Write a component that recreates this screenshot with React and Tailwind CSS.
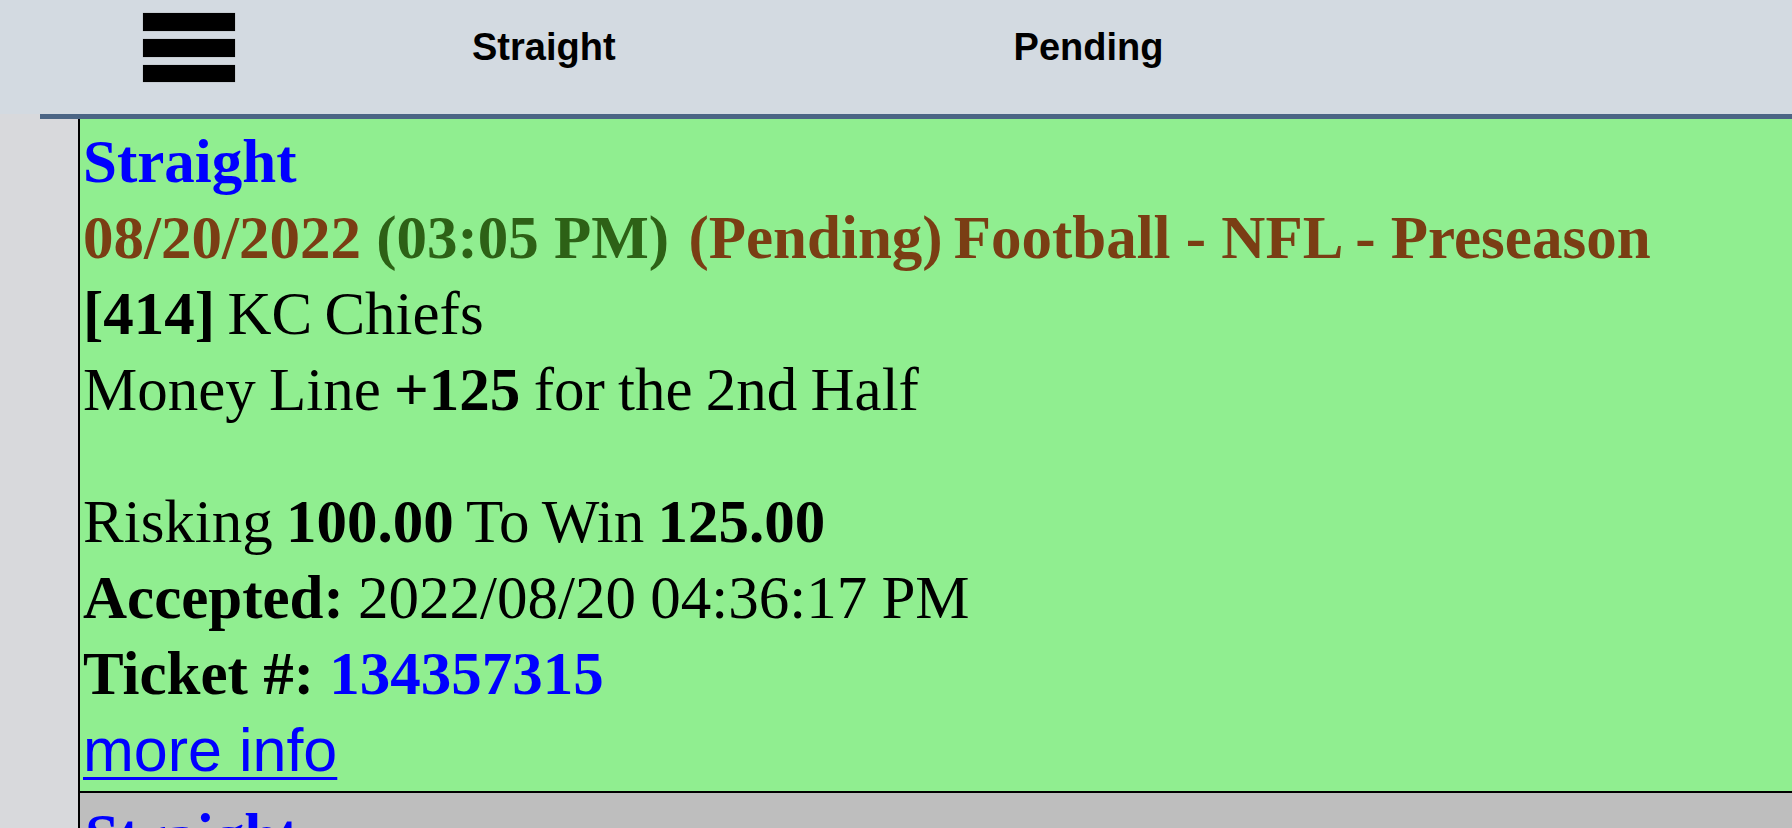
export default function App() {
  const serif = { fontFamily: '"Liberation Serif", "Times New Roman", serif' };
  return (
    <div className="h-screen w-full overflow-hidden bg-[#d8d9dc]">
      {/* Header */}
      <div className="bg-[#d3dae1]">
        <div
          className="flex h-[114px] items-center pb-[20px] pl-[143px] text-[38px] font-bold text-black"
          style={{ fontFamily: '"Liberation Sans", Arial, sans-serif' }}
        >
          <div className="flex w-[92px] flex-col gap-[8px]">
            <div className="h-[18px] w-full bg-black shadow-[0_0_1px_#888]" />
            <div className="h-[18px] w-full bg-black shadow-[0_0_1px_#888]" />
            <div className="h-[17px] w-full bg-black shadow-[0_0_1px_#888]" />
          </div>
          <div className="ml-[237px]">Straight</div>
          <div className="ml-[398px]">Pending</div>
        </div>
      </div>
      <div className="ml-[40px] h-[5px] bg-[#4b6585]" />

      {/* Green ticket */}
      <div
        className="ml-[78px] border-b-2 border-l-2 border-black bg-[#90ee90] pb-[2px] pl-[3px] pt-[5px] text-[61px] leading-[76px] text-black"
        style={serif}
      >
        <div className="font-bold text-[#0000ff]">Straight</div>
        <div className="whitespace-nowrap font-bold text-[#7a3e14]">
          08/20/2022 <span className="text-[#2d6116]">(03:05 PM)</span>{' '}
          <span className="ml-[4px]">(Pending)</span>
          <span className="ml-[11px]">Football - NFL - Preseason</span>
        </div>
        <div className="[word-spacing:-3px]">
          <span className="font-bold">[414]</span> KC Chiefs
        </div>
        <div className="[word-spacing:-2px]">
          Money Line <span className="font-bold">+125</span> for the 2nd Half
        </div>
        <div className="mt-[56px] [word-spacing:-2px]">
          Risking <span className="font-bold">100.00</span> To Win <span className="font-bold">125.00</span>
        </div>
        <div className="[word-spacing:-1px]">
          <span className="font-bold">Accepted:</span> 2022/08/20 04:36:17 PM
        </div>
        <div className="font-bold">
          Ticket #: <span className="text-[#0000ff]">134357315</span>
        </div>
        <div>
          <a
            href="#"
            className="text-[#0000ff] underline decoration-[3px] underline-offset-[6px]"
            style={{ fontFamily: '"Liberation Sans", Arial, sans-serif' }}
          >
            more info
          </a>
        </div>
      </div>

      {/* Next (gray) ticket */}
      <div
        className="ml-[78px] h-[300px] border-l-2 border-black bg-[#bebebe] pl-[5px] pt-[5px] text-[61px] leading-[76px]"
        style={serif}
      >
        <div className="font-bold text-[#0000ff]">Straight</div>
      </div>
    </div>
  );
}
